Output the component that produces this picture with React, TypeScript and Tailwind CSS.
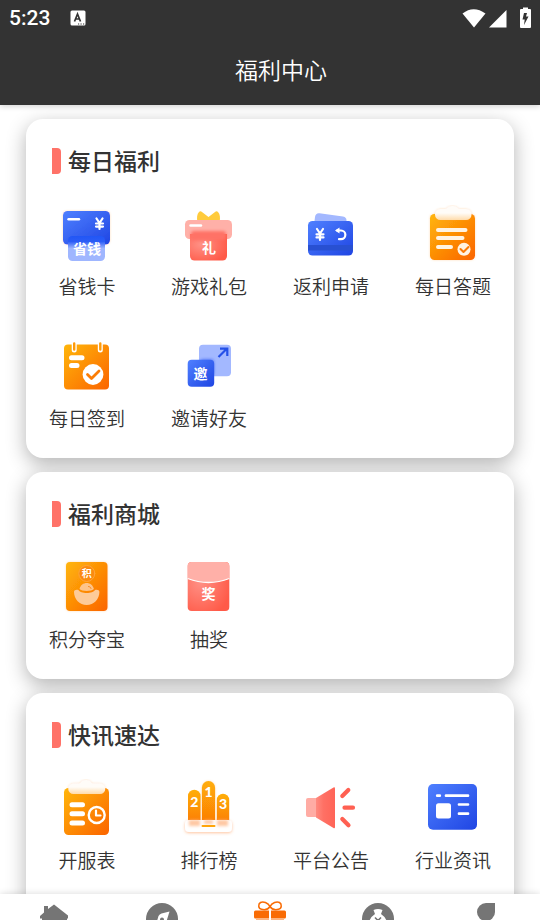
import type { ReactNode } from "react";

type Item = { label: string; icon: ReactNode };
type SectionData = { title: string; items: Item[]; tall?: boolean };

const cjk = "font-['Noto_Sans_CJK_SC',sans-serif]";

function Gradients() {
  return (
    <svg className="absolute size-0" aria-hidden="true">
      <defs>
        <linearGradient id="blue" x1="0" y1="0" x2="1" y2="1">
          <stop offset="0" stopColor="#4f80ff" />
          <stop offset="1" stopColor="#1f45e3" />
        </linearGradient>
        <linearGradient id="orange" x1="0" y1="0" x2="1" y2="1">
          <stop offset="0" stopColor="#ffb60a" />
          <stop offset="1" stopColor="#fb6400" />
        </linearGradient>
        <linearGradient id="bar" x1="0" y1="0" x2="0" y2="1">
          <stop offset="0" stopColor="#ffae08" />
          <stop offset="1" stopColor="#fb7a05" />
        </linearGradient>
        <linearGradient id="clip" x1="0" y1="0" x2="0" y2="1">
          <stop offset="0.5" stopColor="#fffcf8" />
          <stop offset="1" stopColor="#ffdcab" />
        </linearGradient>
        <radialGradient id="red" cx="0.3" cy="0.4" r="0.75">
          <stop offset="0" stopColor="#ff9186" />
          <stop offset="1" stopColor="#ff5a48" />
        </radialGradient>
        <linearGradient id="horn" x1="0" y1="0" x2="1" y2="0">
          <stop offset="0" stopColor="#ff8a7f" />
          <stop offset="0.4" stopColor="#ff7064" />
          <stop offset="1" stopColor="#ff6457" />
        </linearGradient>
        <linearGradient id="fadeBlue" x1="0" y1="0" x2="0" y2="1">
          <stop offset="0" stopColor="#2156f5" />
          <stop offset="0.22" stopColor="#2b5cf6" />
          <stop offset="0.5" stopColor="#9fb6ff" />
          <stop offset="1" stopColor="#9fb6ff" />
        </linearGradient>
        <filter id="glow" x="-20%" y="-20%" width="140%" height="140%">
          <feDropShadow dx="0" dy="0" stdDeviation="1.2" floodColor="#ff9a3e" floodOpacity="0.35" />
        </filter>
        <filter id="baseGlow" x="-20%" y="-50%" width="140%" height="200%">
          <feDropShadow dx="0" dy="1" stdDeviation="1.6" floodColor="#ff8a3e" floodOpacity="0.5" />
        </filter>
        <filter id="soft" x="-20%" y="-50%" width="140%" height="200%">
          <feGaussianBlur stdDeviation="1.5" />
        </filter>
      </defs>
    </svg>
  );
}

function Icon({ children }: { children: ReactNode }) {
  return (
    <svg
      viewBox="0 0 60 60"
      className="size-[60px]"
      fill="none"
      strokeLinecap="round"
      strokeLinejoin="round"
      aria-hidden="true"
    >
      {children}
    </svg>
  );
}

function Glyph({ x, y, size, children }: { x: number; y: number; size: number; children: string }) {
  return (
    <text x={x} y={y} fontSize={size} fill="#fff" textAnchor="middle" className={`${cjk} font-bold`}>
      {children}
    </text>
  );
}

const SavingCard = () => (
  <Icon>
    <rect x="6" y="6" width="47" height="33.5" rx="4.5" fill="url(#blue)" filter="url(#glow)" />
    <rect x="11" y="31" width="37" height="25" rx="4.5" fill="url(#fadeBlue)" />
    <path d="M11.500 14.300H22" stroke="#fff" strokeWidth="2.4" />
    <path d="M39.500 13.500l3 4.500 3-4.500M42.500 18v6M39 18.500h7M39 21.600h7" stroke="#fff" strokeWidth="2.2" />
    <Glyph x={30} y={49} size={14}>省钱</Glyph>
  </Icon>
);

const GiftPack = () => (
  <Icon>
    <path d="M18.500 17c-1-4-.5-8 1.500-10 1-1 2-.8 3.300.3L29.500 12l6.200-4.700c1.300-1.100 2.300-1.300 3.300-.3 2 2 2.500 6 1.500 10z" fill="#ffcb3c" />
    <rect x="6" y="15" width="47" height="19" rx="4.5" fill="#ffb0a8" />
    <path d="M11 29h37v22a4.500 4.500 0 0 1-4.500 4.500h-28A4.500 4.500 0 0 1 11 51z" fill="url(#red)" />
    <rect x="12" y="26" width="35" height="9" rx="3" fill="#ff7266" filter="url(#soft)" />
    <path d="M11.500 20.500H22" stroke="#fff" strokeWidth="2.4" />
    <Glyph x={30} y={48} size={14}>礼</Glyph>
  </Icon>
);

const Refund = () => (
  <Icon>
    <path d="M13 20l1-8c.5-3 2-4 4.500-3.700L42 11.500c2.500.4 3.500 2 3.500 4V20z" fill="#a3b8ff" />
    <rect x="7" y="16" width="45" height="34.5" rx="4.5" fill="url(#blue)" />
    <path d="M7 40h45v5.500H7z" fill="#2850d2" />
    <path d="M16 24l3 4.500 3-4.500M19 28.500V35M15.500 29.300h7M15.500 32.400h7" stroke="#fff" strokeWidth="2.2" />
    <path d="M36 25.500h4a4.300 4.300 0 0 1 0 8.700H38" stroke="#fff" strokeWidth="2.2" />
    <path d="M38.500 22.500l-4.500 3 4.500 3z" fill="#fff" />
  </Icon>
);

const Quiz = () => (
  <Icon>
    <rect x="7" y="9" width="45" height="46" rx="4.5" fill="url(#orange)" filter="url(#glow)" />
    <path d="M17.500 4h5c2 0 2-3 7-3s5 3 7 3h6.500a5.500 5.500 0 0 1 0 11h-25.500a5.500 5.500 0 0 1 0-11z" fill="url(#clip)" filter="url(#glow)" />
    <path d="M15 25h27.500M15 33h24.500M15 42h13" stroke="#fff3e2" strokeWidth="4" />
    <circle cx="41" cy="44.3" r="6.5" fill="#fff3e2" />
    <path d="M37.500 44l3 3 5-5" stroke="#fb7a05" strokeWidth="2" />
  </Icon>
);

const SignIn = () => (
  <Icon>
    <rect x="7" y="7.5" width="45" height="45" rx="4" fill="url(#orange)" />
    <path d="M17.200 7v6M43.300 7v6" stroke="#fff" strokeWidth="5" />
    <path d="M17.200 6.500v6M43.300 6.500v6" stroke="#ff9a08" strokeWidth="2.4" />
    <path d="M14.500 20.700H25M14.500 28.400H20" stroke="#fff" strokeWidth="5" />
    <circle cx="36" cy="37.5" r="10.4" fill="#fff" />
    <path d="M30.500 37.500l4 4 7.500-7.500" stroke="#fb7d05" strokeWidth="2.8" />
  </Icon>
);

const Invite = () => (
  <Icon>
    <rect x="20" y="7.7" width="32" height="31.5" rx="4" fill="#a3b8ff" />
    <rect x="21" y="22" width="14" height="16" rx="3" fill="#5f80f8" filter="url(#soft)" />
    <rect x="8.7" y="22.7" width="26.5" height="27" rx="4" fill="url(#blue)" />
    <path d="M39.500 20l8-8M41 11.700h7.300V19" stroke="#2450e8" strokeWidth="2.2" strokeLinecap="butt" strokeLinejoin="miter" />
    <Glyph x={21.5} y={41.5} size={14}>邀</Glyph>
  </Icon>
);

const Treasure = () => (
  <Icon>
    <rect x="9" y="4" width="41.5" height="49" rx="4" fill="url(#orange)" filter="url(#glow)" />
    <circle cx="29.8" cy="15.5" r="8" fill="#fb8a10" stroke="#ffa63a" strokeWidth="1" />
    <path d="M22.500 31c1-4 4-6 7.200-6s6.200 2 7.200 6c-2 2.500-12.400 2.500-14.400 0z" fill="#fdc48a" />
    <path d="M31.500 28.500c1.300 0 2.200.8 2.500 2" stroke="#f98a20" strokeWidth="1" />
    <path d="M17 34c0-2 2-2.500 4.500-2 1.500 4 14.900 4 16.400 0 2.500-.5 4.500 0 4.500 2 0 7-5.500 13-12.700 13S17 41 17 34z" fill="#fdcb98" />
    <Glyph x={29.8} y={19} size={10}>积</Glyph>
  </Icon>
);

const Lottery = () => (
  <Icon>
    <rect x="8.7" y="4" width="41.6" height="49" rx="4" fill="url(#red)" />
    <path d="M8.700 20.500V8a4 4 0 0 1 4-4h33.600a4 4 0 0 1 4 4v12.500q-20.800 8-41.600 0z" fill="#ffb0a8" />
    <path d="M8.700 20.500q20.800 8 41.600 0" stroke="#fff" strokeWidth="1.3" strokeLinecap="butt" />
    <Glyph x={29.5} y={40.5} size={14}>奖</Glyph>
  </Icon>
);

const Schedule = () => (
  <Icon>
    <rect x="7" y="9" width="45" height="47" rx="4.5" fill="url(#orange)" />
    <path d="M16.500 4.500h5.500c2 0 2-3.500 7-3.500s5 3.500 7 3.500h7a5.200 5.200 0 0 1 0 10.500H16.500a5.200 5.200 0 0 1 0-10.500z" fill="url(#clip)" filter="url(#glow)" />
    <path d="M15 25.800h10.500M15 34.800h10.500M15 44h10.500" stroke="#fff" strokeWidth="5" />
    <circle cx="39.7" cy="36" r="8" stroke="#fff" strokeWidth="2.4" />
    <path d="M39 31.500v5h4.500" stroke="#fff" strokeWidth="2.2" />
  </Icon>
);

const Ranking = () => (
  <Icon>
    <path d="M9 46V17a6.300 6.300 0 0 1 12.600 0v29z" fill="url(#bar)" />
    <path d="M37.800 46V21a6.200 6.200 0 0 1 12.400 0v25z" fill="url(#bar)" />
    <path d="M22.900 46V8.700a6.600 6.600 0 0 1 13.200 0V46z" fill="url(#bar)" filter="url(#glow)" />
    <rect x="6" y="41" width="47" height="12" rx="4" fill="#fff" filter="url(#baseGlow)" />
    <g fill="#ffb98a" opacity="0.8" filter="url(#soft)">
      <rect x="10" y="41" width="11" height="6" />
      <rect x="25" y="41" width="9" height="4" />
      <rect x="38" y="41" width="11" height="6" />
    </g>
    <path d="M23.500 47h12" stroke="#ffa50a" strokeWidth="2" />
    <g fill="#fff" fontSize="14" textAnchor="middle" className="font-['Lato',sans-serif] font-black">
      <text x="29.5" y="18">1</text>
      <text x="15.3" y="28">2</text>
      <text x="44" y="29.5">3</text>
    </g>
  </Icon>
);

const Announcement = () => (
  <Icon>
    <rect x="5" y="19" width="20" height="19" rx="2" fill="#ffaca4" />
    <path d="M15 19L32.500 8.500q1.500-.7 1.500 1v38.500q0 1.700-1.500 1L15 38.500z" fill="url(#horn)" />
    <path d="M41.300 17l6-6M43.500 28.700H52M41.300 40l6.200 6.300" stroke="#ff6052" strokeWidth="4.2" />
  </Icon>
);

const News = () => (
  <Icon>
    <rect x="5" y="5" width="49" height="45.7" rx="5" fill="url(#blue)" />
    <path d="M14.200 16.700h2.600M23 16.700h22M36 25.500h9M36 34.700h9" stroke="#fff" strokeWidth="2.7" />
    <rect x="13" y="24.3" width="15" height="15.3" rx="2.5" fill="#fff" />
  </Icon>
);

const sections: SectionData[] = [
  {
    title: "每日福利",
    items: [
      { label: "省钱卡", icon: <SavingCard /> },
      { label: "游戏礼包", icon: <GiftPack /> },
      { label: "返利申请", icon: <Refund /> },
      { label: "每日答题", icon: <Quiz /> },
      { label: "每日签到", icon: <SignIn /> },
      { label: "邀请好友", icon: <Invite /> },
    ],
  },
  {
    title: "福利商城",
    items: [
      { label: "积分夺宝", icon: <Treasure /> },
      { label: "抽奖", icon: <Lottery /> },
    ],
  },
  {
    title: "快讯速达",
    tall: true,
    items: [
      { label: "开服表", icon: <Schedule /> },
      { label: "排行榜", icon: <Ranking /> },
      { label: "平台公告", icon: <Announcement /> },
      { label: "行业资讯", icon: <News /> },
    ],
  },
];

function StatusBar() {
  return (
    <div className="flex h-9 items-center px-2 text-white">
      <span className="ml-px font-['Roboto',sans-serif] text-[21px] leading-9 font-medium">5:23</span>
      <svg viewBox="0 0 16 16" className="ml-5 size-4" aria-hidden="true">
        <rect x="0.5" y="0.5" width="15" height="15" rx="1.5" fill="#fff" />
        <path d="M4.500 11.500L7.500 4l3 7.500M5.500 9h4" stroke="#333" strokeWidth="1.7" fill="none" />
        <path d="M8 14h1.200M10.500 14h1.200M13 14h1.200" stroke="#333" strokeWidth="1.2" />
      </svg>
      <svg viewBox="0 0 70 22" className="ml-auto h-[22px] w-[70px]" fill="#fff" aria-hidden="true">
        <path d="M0.500 6.500Q11.500-2 23.500 6.500L12 20.500z" />
        <path d="M44.500 3v17.500H27z" />
        <path d="M59 2h2V0.500h5V2h2q1 0 1 1v17q0 1-1 1h-9q-1 0-1-1V3q0-1 1-1z" />
        <path d="M62 6h3l-1 3.500h2.500L62 18l.7-5.500H60.500z" fill="#333" />
      </svg>
    </div>
  );
}

function Section({ title, items, tall }: SectionData) {
  return (
    <section
      className={`shrink-0 rounded-[17px] bg-white shadow-[0_6px_20px_rgba(0,0,0,0.3)] ${tall ? "min-h-[339px]" : ""}`}
    >
      <div className="flex h-[75px] items-start px-[26px] pt-[25px]">
        <span className="mt-1 h-[26px] w-[9px] rounded-r-[4px] bg-[#ff7268]" />
        <h2 className="ml-[7px] text-[23px] leading-8 font-medium">{title}</h2>
      </div>
      <div className="grid grid-cols-4">
        {items.map((item) => (
          <button key={item.label} type="button" className="flex flex-col items-center pt-[11px] pb-[26px]">
            {item.icon}
            <span className="mt-[7px] text-[19px] leading-7 font-[350] whitespace-nowrap">{item.label}</span>
          </button>
        ))}
      </div>
    </section>
  );
}

const tabs: Item[] = [
  {
    label: "首页",
    icon: <path d="M2 17.500V15l4-3.500V5h4v3l6-4.500 14 11v3h-1V34H4V17.500z" fill="#757575" />,
  },
  {
    label: "发现",
    icon: (
      <>
        <circle cx="16" cy="18" r="16" fill="#757575" />
        <path d="M23.500 10.500L20 22l-11 5 3.500-12q1-2 3-2.500z" fill="#fff" />
        <circle cx="16" cy="18.500" r="2" fill="#757575" />
      </>
    ),
  },
  {
    label: "福利",
    icon: (
      <>
        <path d="M16 5.500C14 1.500 9 0 6.500 1.500S4 7.500 7.500 8.300 14.500 8 16 5.500zm0 0C18 1.500 23 0 25.500 1.500S28 7.500 24.500 8.300 17.500 8 16 5.500z" fill="none" stroke="#f96c05" strokeWidth="1.5" />
        <path d="M1.500 9.500H15v8H1.500Q0 17.500 0 16v-5q0-1.500 1.500-1.500zM17 9.500h13.500Q32 9.500 32 11v5q0 1.500-1.500 1.500H17zM2 18.600h13v12H2zM17 18.600h13v12H17z" fill="#f96c05" />
      </>
    ),
  },
  {
    label: "赚钱",
    icon: (
      <>
        <circle cx="16" cy="18" r="16" fill="#757575" />
        <path d="M11.500 9q4.500-2 9 0l-1.500 4q6 4 6 10H7q0-6 6-10z" fill="#fff" />
        <path d="M13 16.500l3 3 3-3M12.500 20.500h7" fill="none" stroke="#757575" strokeWidth="1.6" />
      </>
    ),
  },
  {
    label: "我的",
    icon: <path d="M16 2h9v9a9 9 0 1 1-9-9z" fill="#757575" />,
  },
];

function TabBar() {
  return (
    <nav className="relative z-10 shrink-0 bg-white shadow-[0_-1px_6px_rgba(0,0,0,0.12)]">
      <div className="grid h-[26px] grid-cols-5 overflow-hidden">
        {tabs.map((tab) => (
          <button key={tab.label} type="button" aria-label={tab.label} className="flex justify-center pt-[7px]">
            <svg viewBox="0 0 32 32" className="size-8 shrink-0 overflow-visible" aria-hidden="true">
              {tab.icon}
            </svg>
          </button>
        ))}
      </div>
    </nav>
  );
}

export default function App() {
  return (
    <div className={`${cjk} flex h-screen flex-col overflow-hidden bg-white text-[#333]`}>
      <Gradients />
      <header className="relative z-10 shrink-0 bg-[#333] shadow-[0_1px_6px_rgba(0,0,0,0.2)]">
        <StatusBar />
        <h1 className="h-[69px] pl-[22px] text-center text-[23px] leading-[66px] font-[350] text-white">福利中心</h1>
      </header>
      <main className="flex min-h-0 flex-1 flex-col gap-3.5 overflow-hidden px-[26px] pt-3.5">
        {sections.map((section) => (
          <Section key={section.title} {...section} />
        ))}
      </main>
      <TabBar />
    </div>
  );
}
